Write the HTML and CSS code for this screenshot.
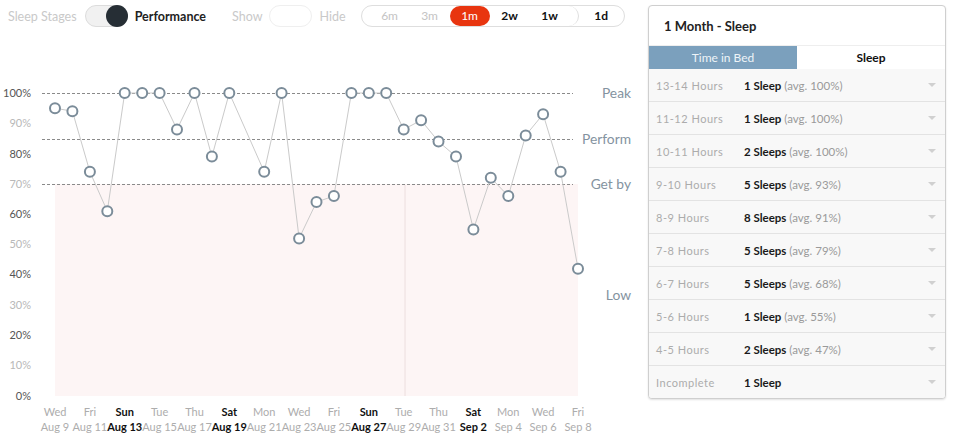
FILE: index.html
```html
<!DOCTYPE html>
<html>
<head>
<meta charset="utf-8">
<link rel="stylesheet" href="styles.css">
</head>
<body>
<div class="page">
  <div class="main">
    <div class="toolbar">
      <span class="muted">Sleep Stages</span>
      <span class="toggle toggle-on"><span class="knob"></span></span>
      <span class="strong">Performance</span>
      <span class="muted show">Show</span>
      <span class="toggle toggle-off"></span>
      <span class="muted hide">Hide</span>
      <div class="seg">
        <div class="seg-group">
          <span class="seg-item dim">6m</span>
          <span class="seg-item dim">3m</span>
          <span class="seg-item active">1m</span>
          <span class="seg-item">2w</span>
          <span class="seg-item">1w</span>
        </div>
        <span class="seg-item last">1d</span>
      </div>
    </div>
    <svg class="chart" width="640" height="407" viewBox="0 32 640 407">
      <rect x="55" y="184" width="523" height="212" fill="#fdf5f5"/>
      <line x1="405" y1="185" x2="405" y2="396" stroke="#ecdede" stroke-width="1"/>
      <g class="dash">
        <line x1="42" y1="93.5" x2="573" y2="93.5"/>
        <line x1="42" y1="139.5" x2="573" y2="139.5"/>
        <line x1="42" y1="184.5" x2="573" y2="184.5"/>
      </g>
      <g class="ylab">
        <text x="31" y="97" class="dk">100%</text>
        <text x="31" y="127">90%</text>
        <text x="31" y="158" class="dk">80%</text>
        <text x="31" y="188">70%</text>
        <text x="31" y="218" class="dk">60%</text>
        <text x="31" y="248">50%</text>
        <text x="31" y="278" class="dk">40%</text>
        <text x="31" y="309">30%</text>
        <text x="31" y="339" class="dk">20%</text>
        <text x="31" y="369">10%</text>
        <text x="31" y="400" class="dk">0%</text>
      </g>
      <g class="zone">
        <text x="631" y="98">Peak</text>
        <text x="631" y="144">Perform</text>
        <text x="631" y="189">Get by</text>
        <text x="631" y="300">Low</text>
      </g>
      <polyline class="trend" points="55,108.2 72.4,111.2 89.9,171.8 107.3,211.2 124.7,93 142.2,93 159.6,93 177,129.4 194.5,93 211.9,156.6 229.3,93 264.2,171.8 281.6,93 299.1,238.4 316.5,202.1 333.9,196 351.4,93 368.8,93 386.2,93 403.7,129.4 421.1,120.3 438.5,141.5 456,156.6 473.4,229.4 490.8,177.8 508.3,196 525.7,135.4 543.1,114.2 560.6,171.8 578,268.7"/>
      <g class="pts">
        <circle cx="55" cy="108.2" r="5"/>
        <circle cx="72.4" cy="111.2" r="5"/>
        <circle cx="89.9" cy="171.8" r="5"/>
        <circle cx="107.3" cy="211.2" r="5"/>
        <circle cx="124.7" cy="93" r="5"/>
        <circle cx="142.2" cy="93" r="5"/>
        <circle cx="159.6" cy="93" r="5"/>
        <circle cx="177" cy="129.4" r="5"/>
        <circle cx="194.5" cy="93" r="5"/>
        <circle cx="211.9" cy="156.6" r="5"/>
        <circle cx="229.3" cy="93" r="5"/>
        <circle cx="264.2" cy="171.8" r="5"/>
        <circle cx="281.6" cy="93" r="5"/>
        <circle cx="299.1" cy="238.4" r="5"/>
        <circle cx="316.5" cy="202.1" r="5"/>
        <circle cx="333.9" cy="196" r="5"/>
        <circle cx="351.4" cy="93" r="5"/>
        <circle cx="368.8" cy="93" r="5"/>
        <circle cx="386.2" cy="93" r="5"/>
        <circle cx="403.7" cy="129.4" r="5"/>
        <circle cx="421.1" cy="120.3" r="5"/>
        <circle cx="438.5" cy="141.5" r="5"/>
        <circle cx="456" cy="156.6" r="5"/>
        <circle cx="473.4" cy="229.4" r="5"/>
        <circle cx="490.8" cy="177.8" r="5"/>
        <circle cx="508.3" cy="196" r="5"/>
        <circle cx="525.7" cy="135.4" r="5"/>
        <circle cx="543.1" cy="114.2" r="5"/>
        <circle cx="560.6" cy="171.8" r="5"/>
        <circle cx="578" cy="268.7" r="5"/>
      </g>
      <g class="xlab">
        <text x="55" y="416">Wed</text><text x="55" y="431">Aug 9</text>
        <text x="89.9" y="416">Fri</text><text x="89.9" y="431">Aug 11</text>
        <text x="124.7" y="416" class="we">Sun</text><text x="124.7" y="431" class="we">Aug 13</text>
        <text x="159.6" y="416">Tue</text><text x="159.6" y="431">Aug 15</text>
        <text x="194.5" y="416">Thu</text><text x="194.5" y="431">Aug 17</text>
        <text x="229.3" y="416" class="we">Sat</text><text x="229.3" y="431" class="we">Aug 19</text>
        <text x="264.2" y="416">Mon</text><text x="264.2" y="431">Aug 21</text>
        <text x="299.1" y="416">Wed</text><text x="299.1" y="431">Aug 23</text>
        <text x="333.9" y="416">Fri</text><text x="333.9" y="431">Aug 25</text>
        <text x="368.8" y="416" class="we">Sun</text><text x="368.8" y="431" class="we">Aug 27</text>
        <text x="403.7" y="416">Tue</text><text x="403.7" y="431">Aug 29</text>
        <text x="438.5" y="416">Thu</text><text x="438.5" y="431">Aug 31</text>
        <text x="473.4" y="416" class="we">Sat</text><text x="473.4" y="431" class="we">Sep 2</text>
        <text x="508.3" y="416">Mon</text><text x="508.3" y="431">Sep 4</text>
        <text x="543.1" y="416">Wed</text><text x="543.1" y="431">Sep 6</text>
        <text x="578" y="416">Fri</text><text x="578" y="431">Sep 8</text>
      </g>
    </svg>
  </div>
  <aside class="panel">
    <div class="panel-head">1 Month - Sleep</div>
    <div class="tabs">
      <div class="tab tab-active">Time in Bed</div>
      <div class="tab">Sleep</div>
    </div>
    <div class="row"><span class="lbl">13-14 Hours</span><span class="val"><b>1 Sleep</b> (avg. 100%)</span><span class="caret"></span></div>
    <div class="row"><span class="lbl">11-12 Hours</span><span class="val"><b>1 Sleep</b> (avg. 100%)</span><span class="caret"></span></div>
    <div class="row"><span class="lbl">10-11 Hours</span><span class="val"><b>2 Sleeps</b> (avg. 100%)</span><span class="caret"></span></div>
    <div class="row"><span class="lbl">9-10 Hours</span><span class="val"><b>5 Sleeps</b> (avg. 93%)</span><span class="caret"></span></div>
    <div class="row"><span class="lbl">8-9 Hours</span><span class="val"><b>8 Sleeps</b> (avg. 91%)</span><span class="caret"></span></div>
    <div class="row"><span class="lbl">7-8 Hours</span><span class="val"><b>5 Sleeps</b> (avg. 79%)</span><span class="caret"></span></div>
    <div class="row"><span class="lbl">6-7 Hours</span><span class="val"><b>5 Sleeps</b> (avg. 68%)</span><span class="caret"></span></div>
    <div class="row"><span class="lbl">5-6 Hours</span><span class="val"><b>1 Sleep</b> (avg. 55%)</span><span class="caret"></span></div>
    <div class="row"><span class="lbl">4-5 Hours</span><span class="val"><b>2 Sleeps</b> (avg. 47%)</span><span class="caret"></span></div>
    <div class="row"><span class="lbl">Incomplete</span><span class="val"><b>1 Sleep</b></span><span class="caret"></span></div>
  </aside>
</div>
</body>
</html>
```

FILE: styles.css
```css
* { box-sizing: border-box; }
html, body { margin: 0; padding: 0; background: #fff; }
body { font-family: Lato, "Liberation Sans", sans-serif; color: #222; }
.page { display: flex; align-items: flex-start; width: 954px; height: 439px; overflow: hidden; }
.main { width: 640px; flex: none; }
.toolbar { height: 32px; display: flex; align-items: center; padding-left: 8px; font-size: 12.5px; }
.muted { color: #c9c9c9; }
.strong { color: #222; font-weight: 700; margin-left: 7px; font-size: 12.5px; }
.show { margin-left: 26px; }
.hide { margin-left: 8px; }
.toggle { width: 43px; height: 22px; border-radius: 11px; display: inline-flex; justify-content: flex-end; flex: none; }
.toggle-on { background: #f1f1f1; border: 1px solid #dcdcdc; margin-left: 8px; }
.toggle-off { background: #fff; border: 1px solid #efefef; margin-left: 6px; }
.knob { width: 22px; height: 22px; border-radius: 50%; background: #262e35; margin: -1px -1px 0 0; }
.seg { margin-left: 15px; height: 22px; width: 264px; border: 1px solid #dedede; border-radius: 11px; display: flex; align-items: center; }
.seg-group { display: flex; align-items: center; height: 20px; padding-left: 8px; padding-right: 8px; border-right: 1px solid #dedede; border-radius: 0 10px 10px 0; }
.seg-item { width: 40px; height: 20px; line-height: 20px; text-align: center; font-size: 12px; font-weight: 700; color: #111; border-radius: 10px; }
.seg-item.dim { color: #c4c4c4; font-weight: 400; }
.seg-item.active { background: #e8350f; color: #fff; font-weight: 400; }
.seg-item.last { width: 47px; }
.chart { display: block; }
.chart text { font-family: Lato, "Liberation Sans", sans-serif; }
.dash line { stroke: #8a8a8a; stroke-width: 1; stroke-dasharray: 3 2; }
.ylab text { font-size: 11px; text-anchor: end; fill: #b8b8b8; }
.ylab text.dk { fill: #555; }
.zone text { font-size: 13.8px; text-anchor: end; fill: #84939f; }
.trend { fill: none; stroke: #cacaca; stroke-width: 1; }
.pts circle { fill: #fff; stroke: #7b8c99; stroke-width: 2; }
.xlab text { font-size: 11px; text-anchor: middle; fill: #adadad; }
.xlab text.we { fill: #111; font-weight: 700; }
.panel { width: 298px; margin-left: 8px; margin-top: 5px; border: 1px solid #cfcfcf; border-radius: 4px; box-shadow: 0 1px 2px rgba(0,0,0,0.12); background: #fff; overflow: hidden; flex: none; }
.panel-head { height: 39px; padding-left: 15px; display: flex; align-items: center; font-size: 13px; font-weight: 700; color: #222; }
.tabs { display: flex; height: 24px; border-top: 1px solid #eee; }
.tab { flex: 1; display: flex; align-items: center; justify-content: center; font-size: 12px; font-weight: 700; color: #111; }
.tab-active { background: #7ba0bd; color: #eef4f8; font-weight: 400; }
.row { height: 33px; display: flex; align-items: center; padding-left: 7px; padding-right: 9px; background: #f8f8f8; border-top: 1px solid #e3e3e3; font-size: 11.5px; }
.tabs + .row { border-top: none; height: 32px; }
.lbl { width: 88px; color: #acacac; letter-spacing: 0.5px; font-size: 11px; }
.val { flex: 1; color: #9a9a9a; }
.val b { color: #1a1a1a; font-weight: 700; }
.caret { width: 0; height: 0; border-left: 4px solid transparent; border-right: 4px solid transparent; border-top: 4px solid #d0d0d0; }
```
